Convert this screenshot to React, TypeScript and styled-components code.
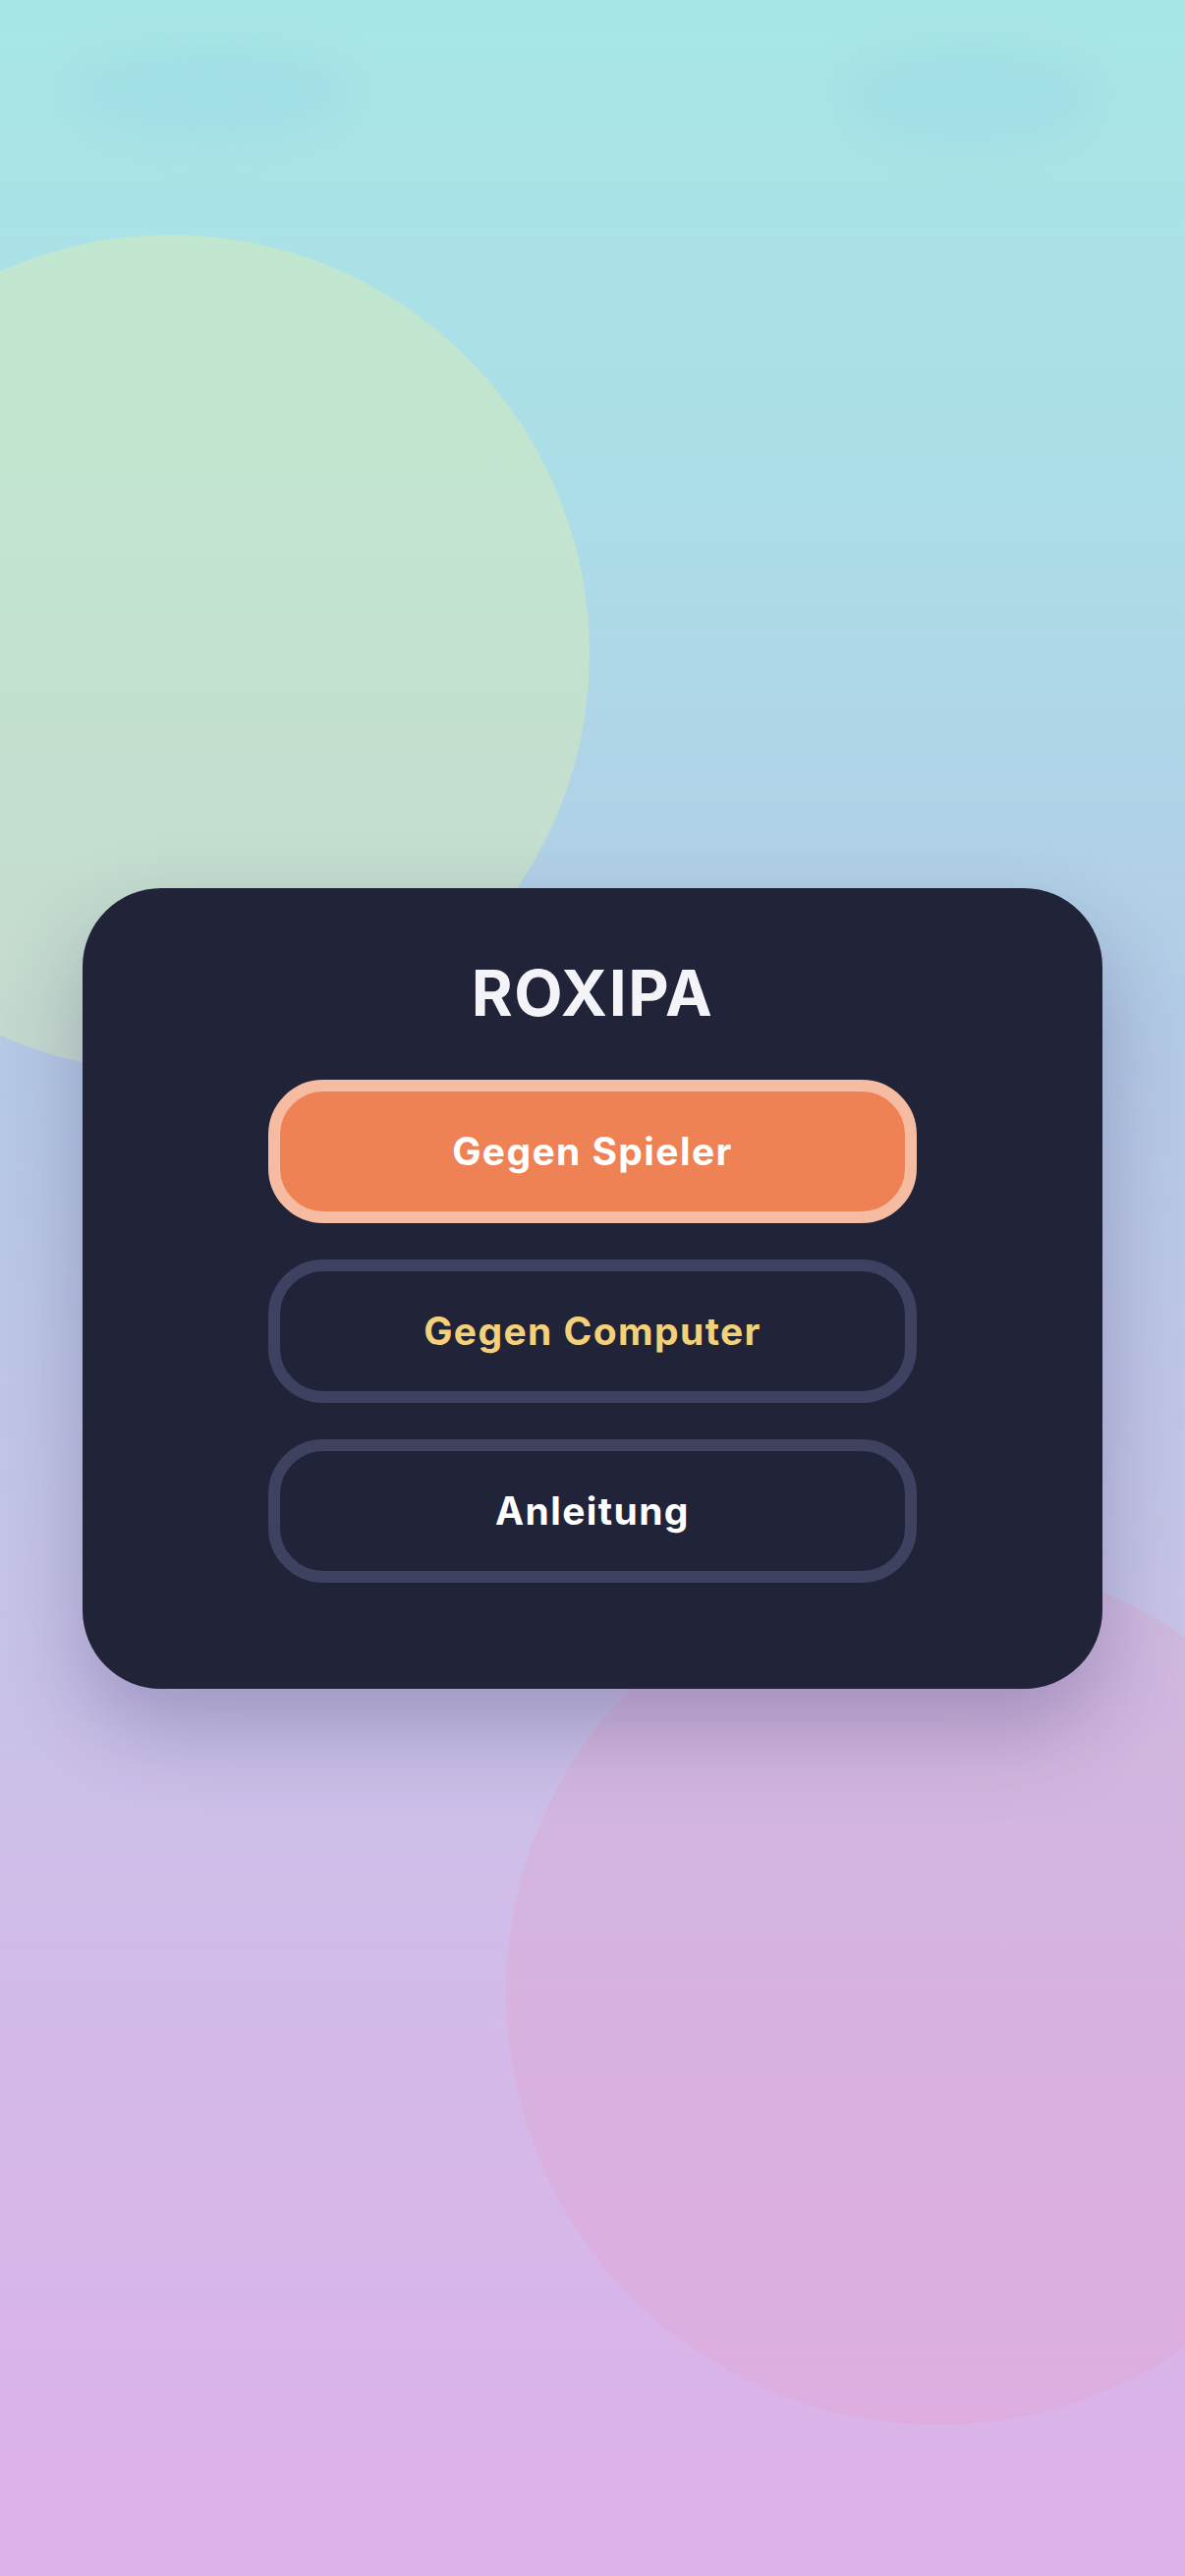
import styled, { createGlobalStyle } from "styled-components";

const GlobalStyle = createGlobalStyle`
  html, body {
    margin: 0;
    padding: 0;
  }
  body {
    font-family: Inter, "Noto Sans", "Liberation Sans", sans-serif;
    -webkit-font-smoothing: antialiased;
  }
  * {
    box-sizing: border-box;
  }
`;

const Screen = styled.main`
  position: relative;
  min-height: 100vh;
  overflow: hidden;
  display: flex;
  align-items: center;
  justify-content: center;
  padding: 0 84px;
  background: linear-gradient(
    180deg,
    #a8e6e6 0%,
    #acdde8 20%,
    #b4cbe6 40%,
    #c7c4e8 62%,
    #d4b9e8 80%,
    #ddb1ea 100%
  );
`;

// soft background shapes behind the menu
const Blob = styled.div<{ $x: number; $y: number; $w: number; $h: number; $color: string; $blur?: number }>`
  position: absolute;
  left: ${(p) => p.$x - p.$w / 2}px;
  top: ${(p) => p.$y - p.$h / 2}px;
  width: ${(p) => p.$w}px;
  height: ${(p) => p.$h}px;
  border-radius: 50%;
  background: ${(p) => p.$color};
  filter: ${(p) => (p.$blur ? `blur(${p.$blur}px)` : "none")};
  pointer-events: none;
`;

const Card = styled.section`
  position: relative;
  z-index: 1;
  width: 100%;
  max-width: 1038px;
  background: #212439;
  border-radius: 80px;
  padding: 68px 0 108px;
  display: flex;
  flex-direction: column;
  align-items: center;
  box-shadow: 0 40px 90px rgba(45, 35, 95, 0.28);
`;

const Title = styled.h1`
  margin: 0 0 49px;
  font-size: 64px;
  line-height: 78px;
  font-weight: 700;
  color: #f4f4f8;
  letter-spacing: 1.6px;
`;

const Menu = styled.nav`
  display: flex;
  flex-direction: column;
  gap: 37px;
  width: 660px;
`;

const MenuButton = styled.button<{ $variant?: "primary" | "accent" | "plain" }>`
  height: 146px;
  width: 100%;
  border-radius: 56px;
  border: 12px solid
    ${(p) => (p.$variant === "primary" ? "#f5bca1" : "#3e4160")};
  background: ${(p) => (p.$variant === "primary" ? "#ee8255" : "transparent")};
  color: ${(p) => (p.$variant === "accent" ? "#f3d17a" : "#ffffff")};
  font-family: inherit;
  font-size: 39px;
  font-weight: 700;
  letter-spacing: 1.4px;
  cursor: pointer;
  display: flex;
  align-items: center;
  justify-content: center;
`;

export default function App() {
  return (
    <>
      <GlobalStyle />
      <Screen>
        <Blob $x={215} $y={92} $w={290} $h={97} $color="rgba(140, 205, 228, 0.2)" $blur={18} />
        <Blob $x={988} $y={96} $w={254} $h={107} $color="rgba(140, 205, 228, 0.2)" $blur={18} />
        <Blob $x={174} $y={665} $w={852} $h={852} $color="rgba(218, 236, 182, 0.48)" />
        <Blob $x={955} $y={2028} $w={880} $h={880} $color="rgba(230, 160, 200, 0.27)" />
        <Card>
          <Title>ROXIPA</Title>
          <Menu>
            <MenuButton $variant="primary">Gegen Spieler</MenuButton>
            <MenuButton $variant="accent">Gegen Computer</MenuButton>
            <MenuButton $variant="plain">Anleitung</MenuButton>
          </Menu>
        </Card>
      </Screen>
    </>
  );
}
